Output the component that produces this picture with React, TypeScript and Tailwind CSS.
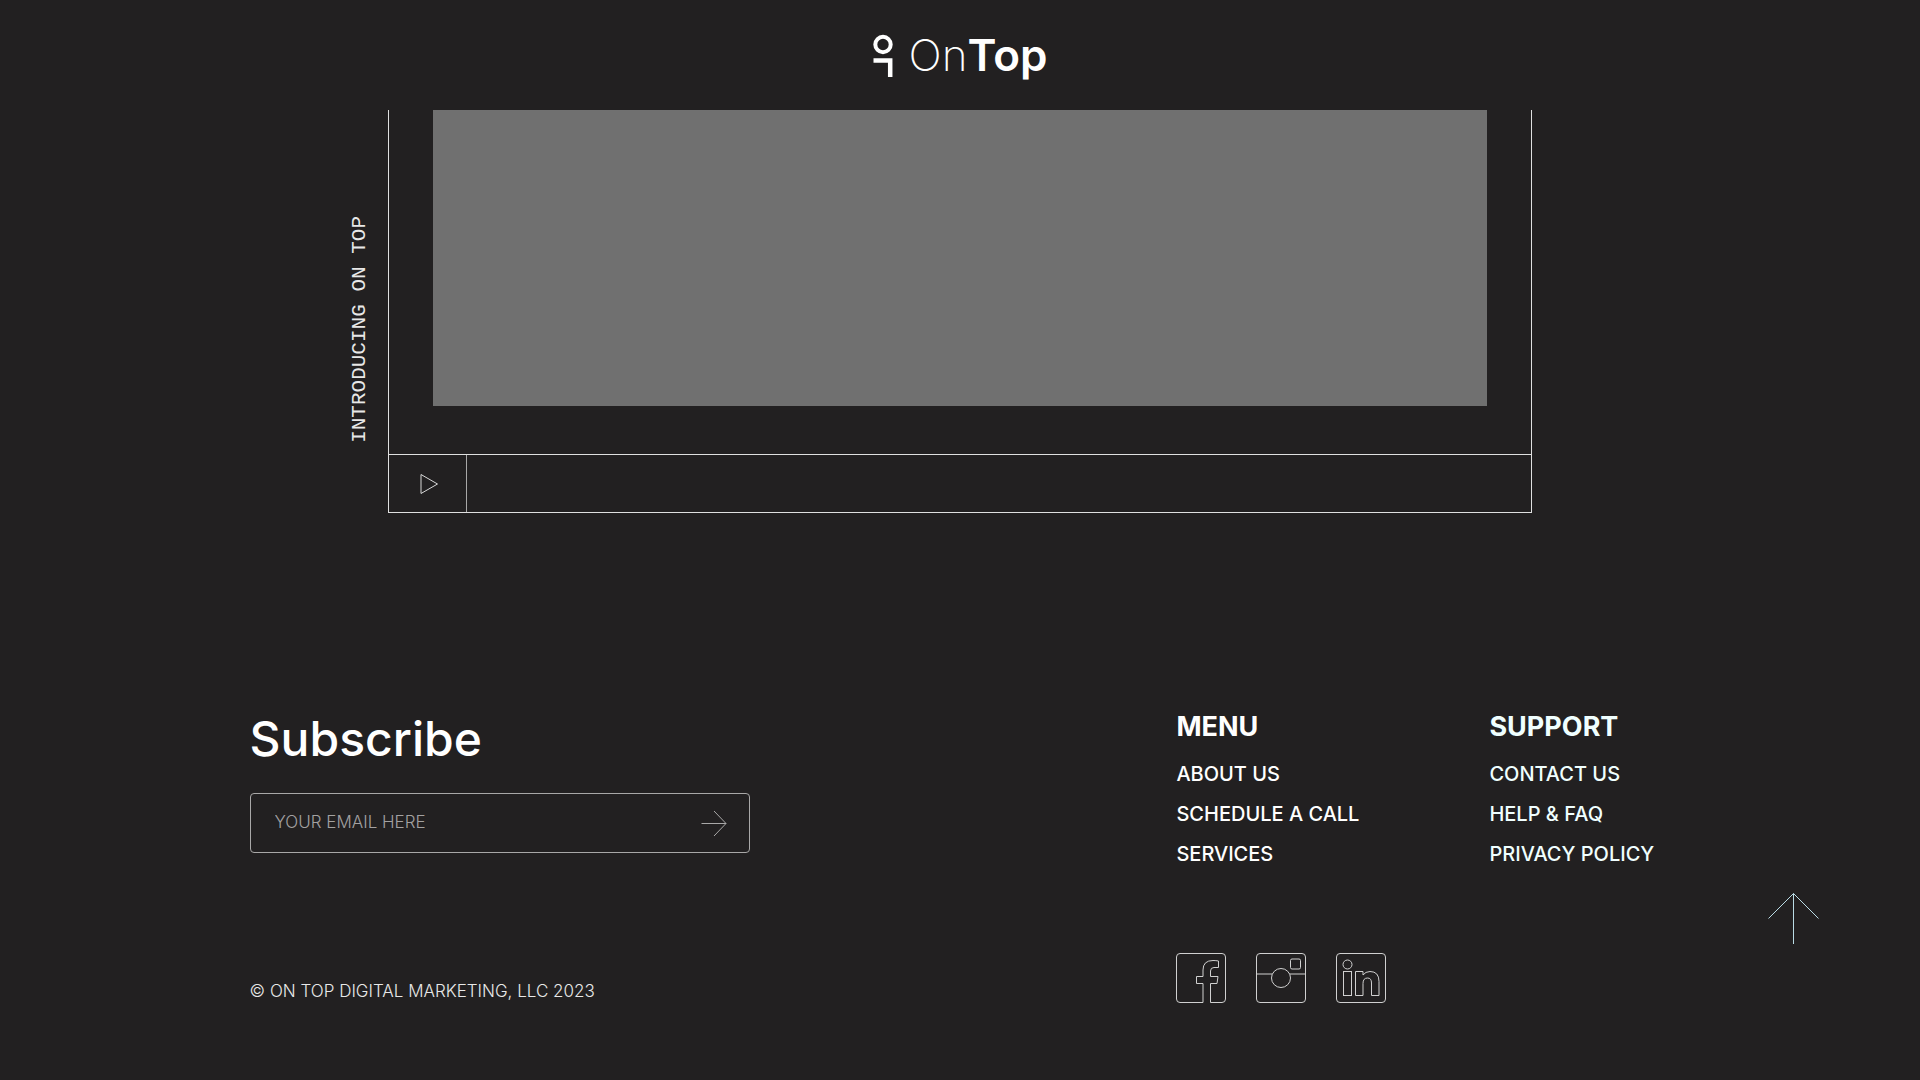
import React from "react";

interface LinkGroup {
  title: string;
  links: string[];
  className: string;
}

const linkGroups: LinkGroup[] = [
  {
    title: "MENU",
    links: ["ABOUT US", "SCHEDULE A CALL", "SERVICES"],
    className: "text-white",
  },
  {
    title: "SUPPORT",
    links: ["CONTACT US", "HELP & FAQ", "PRIVACY POLICY"],
    className: "text-[#f0ffff]",
  },
];

const Header: React.FC = () => (
  <header className="flex h-[110px] items-center justify-center">
    <a href="#top" className="flex items-center gap-4" aria-label="OnTop">
      <svg width="20" height="44" viewBox="0 0 20 44" fill="none" stroke="#fff">
        <circle cx="10" cy="11.5" r="7.7" strokeWidth="4" />
        <path d="M0.5 27.5H17.2V44" strokeWidth="4.5" />
      </svg>
      <span className="text-[44px] leading-[48px] text-white">
        <span className="font-extralight">On</span>
        <span className="font-semibold">Top</span>
      </span>
    </a>
  </header>
);

const VideoPlayer: React.FC = () => (
  <section className="mx-auto flex w-full max-w-[1224px] pr-10">
    <p className="w-10 shrink-0 rotate-180 self-end pt-[70px] font-['Liberation_Mono',monospace] text-[21px] leading-[24px] text-[#e8e8e8] [writing-mode:vertical-rl]">
      INTRODUCING ON TOP
    </p>
    <div className="flex-1 border-x border-b border-[#e0e0e0]">
      <div className="px-11 pb-12">
        <div className="h-[296px] bg-[#707070]" />
      </div>
      <div className="flex h-[58px] border-t border-[#e0e0e0]">
        <button
          type="button"
          aria-label="Play video"
          className="flex w-[78px] items-center justify-center border-r border-[#a8a8a8] pl-0.5"
        >
          <svg width="20" height="22" viewBox="0 0 20 22" fill="none" stroke="#d8d8d8">
            <path d="M2 1.5V20.5L18.5 11Z" />
          </svg>
        </button>
      </div>
    </div>
  </section>
);

const SubscribeForm: React.FC = () => (
  <form onSubmit={(e) => e.preventDefault()}>
    <label htmlFor="email" className="block text-[48px] leading-[56px] font-medium text-white">
      Subscribe
    </label>
    <div className="mt-[26px] flex h-[60px] items-center rounded border border-[#a9a8a8] pr-[22px] pl-6">
      <input
        id="email"
        type="email"
        placeholder="YOUR EMAIL HERE"
        className="min-w-0 flex-1 bg-transparent text-[17px] font-light text-white outline-none placeholder:text-[#a3a1a1]"
      />
      <button type="submit" aria-label="Subscribe">
        <svg width="26" height="26" viewBox="0 0 26 26" fill="none" stroke="#a9a8a8">
          <path d="M0.5 13.5H25M13 1L25 13.5L13 26" />
        </svg>
      </button>
    </div>
  </form>
);

const SocialLinks: React.FC = () => (
  <div className="flex gap-[30px]">
    <a href="#facebook" aria-label="Facebook">
      <svg width="50" height="50" viewBox="0 0 50 50" fill="none" stroke="#d0d0d0">
        <path d="M27 49.5H4Q0.5 49.5 0.5 46V4Q0.5 0.5 4 0.5H46Q49.5 0.5 49.5 4V46Q49.5 49.5 46 49.5H34.5V30.5H41L42 23.5H34.5V18Q34.5 14.5 38 14.5H42.5V8Q40 7.5 37 7.5Q27 7.5 27 17V23.5H20.5V30.5H27Z" />
      </svg>
    </a>
    <a href="#instagram" aria-label="Instagram">
      <svg width="50" height="50" viewBox="0 0 50 50" fill="none" stroke="#d0d0d0">
        <rect x="0.5" y="0.5" width="49" height="49" rx="3.5" />
        <rect x="34.5" y="6" width="10" height="10" rx="1.5" />
        <circle cx="25" cy="25" r="9.5" />
        <path d="M0.5 21H16.4M33.6 21H49.5" />
      </svg>
    </a>
    <a href="#linkedin" aria-label="LinkedIn">
      <svg width="50" height="50" viewBox="0 0 50 50" fill="none" stroke="#d0d0d0">
        <rect x="0.5" y="0.5" width="49" height="49" rx="3.5" />
        <circle cx="11.5" cy="11.5" r="4.5" />
        <rect x="7.5" y="18.5" width="8" height="24" />
        <path d="M19.5 18.5H27V22Q29.5 18.5 34 18.5Q43 18.5 43 28.5V42.5H35.5V30Q35.5 25 31.5 25Q27 25 27 30.5V42.5H19.5Z" />
      </svg>
    </a>
  </div>
);

const Footer: React.FC = () => (
  <footer className="mt-[195px] px-[13%] pb-[76px]">
    <div className="flex items-start justify-between">
      <div className="w-[500px] pt-[3px]">
        <SubscribeForm />
      </div>
      <nav className="grid grid-cols-[313px_181px]">
        {linkGroups.map((group) => (
          <div key={group.title} className={group.className}>
            <h2 className="text-[27px] leading-[38px] font-bold">{group.title}</h2>
            <ul className="mt-2">
              {group.links.map((link) => (
                <li key={link} className="text-[20px] leading-10 font-medium whitespace-nowrap">
                  <a href="#footer">{link}</a>
                </li>
              ))}
            </ul>
          </div>
        ))}
      </nav>
    </div>
    <div className="mt-[79px] flex items-end justify-between">
      <p className="text-[17px] leading-6 font-light text-[#e8e8e8]">
        © ON TOP DIGITAL MARKETING, LLC 2023
      </p>
      <div className="w-[494px]">
        <SocialLinks />
      </div>
    </div>
  </footer>
);

const App: React.FC = () => {
  return (
    <div
      id="top"
      className="min-h-screen bg-[#222021] font-['Inter','Liberation_Sans',sans-serif]"
    >
      <Header />
      <main>
        <VideoPlayer />
      </main>
      <Footer />
      <a href="#top" aria-label="Back to top" className="fixed right-[101px] bottom-[136px]">
        <svg width="51" height="51" viewBox="0 0 51 51" fill="none" stroke="#b9dbe4">
          <path d="M0.5 25.5L25.5 0.5L50.5 25.5M25.5 0.5V51" />
        </svg>
      </a>
    </div>
  );
};

export default App;
